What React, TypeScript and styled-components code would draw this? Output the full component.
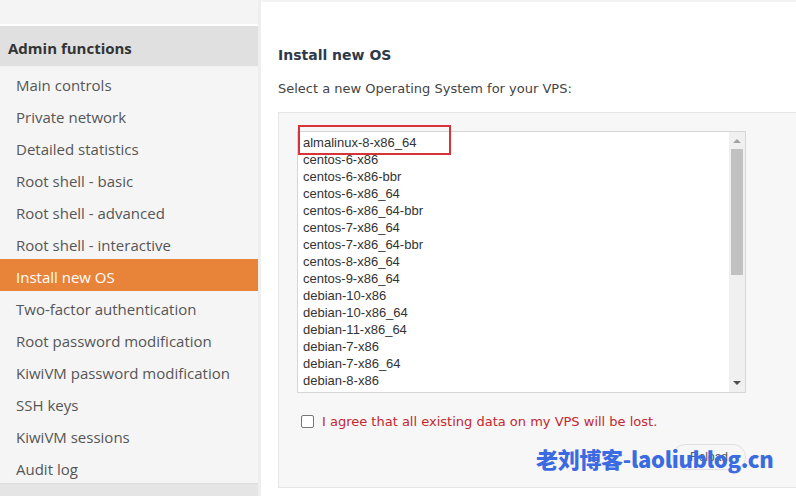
import React from "react";
import styled, { createGlobalStyle } from "styled-components";

const Global = createGlobalStyle`
  html, body { margin: 0; padding: 0; background: #ffffff; }
  body { width: 796px; height: 496px; overflow: hidden; }
  * { box-sizing: border-box; }
`;

const Page = styled.div`
  display: flex;
  width: 796px;
  height: 496px;
  position: relative;
  overflow: hidden;
`;

const Sidebar = styled.nav`
  width: 261px;
  flex: none;
  display: flex;
  flex-direction: column;
  background: #f5f5f5;
  border-right: 3px solid #eeeeee;
  font-family: "Open Sans", "Noto Sans", sans-serif;
`;

const SideTop = styled.div`
  height: 26px;
  background: #f4f4f4;
  border-bottom: 2px solid #ffffff;
`;

const SideHeader = styled.div`
  height: 41px;
  display: flex;
  align-items: center;
  padding: 4px 0 0 8px;
  background: #e0e0e0;
  border-bottom: 1px solid #f2f2f2;
  font-size: 15px;
  font-weight: 700;
  color: #333333;
`;

const NavItem = styled.div<{ $active?: boolean }>`
  height: 32px;
  display: flex;
  align-items: center;
  padding: 4px 0 0 16px;
  font-size: 15px;
  color: ${(p) => (p.$active ? "#ffffff" : "#555555")};
  background: ${(p) => (p.$active ? "#e8843a" : "transparent")};
`;

const SideBottom = styled.div`
  flex: 1;
  background: #e5e5e5;
  border-top: 1px solid #dcdcdc;
`;

const Main = styled.main`
  flex: 1;
  display: flex;
  flex-direction: column;
  padding: 44px 0 0 17px;
  background: #ffffff;
  border-top: 2px solid #f3f3f3;
  font-family: "DejaVu Sans", Verdana, sans-serif;
`;

const Title = styled.h2`
  margin: 0;
  font-size: 14px;
  font-weight: 700;
  color: #2d3a4a;
  line-height: 18px;
`;

const Lead = styled.p`
  margin: 17px 0 0 0;
  font-size: 13px;
  color: #444444;
  line-height: 16px;
`;

const Panel = styled.section`
  margin-top: 15px;
  height: 376px;
  background: #f7f7f7;
  border: 1px solid #e6e6e6;
  border-right: none;
  padding: 18px 0 0 18px;
  display: flex;
  flex-direction: column;
`;

const ListBox = styled.div`
  width: 449px;
  height: 262px;
  flex: none;
  background: #ffffff;
  border: 1px solid #d6d6d6;
  display: flex;
  position: relative;
`;

const Options = styled.div`
  flex: 1;
  overflow: hidden;
  padding: 2px 0 0 5px;
  font-family: "Liberation Sans", Arial, sans-serif;
  font-size: 13px;
  color: #333333;
`;

const Option = styled.div`
  height: 17px;
  line-height: 17px;
  white-space: nowrap;
`;

const Scrollbar = styled.div`
  width: 16px;
  flex: none;
  background: #f0f0f0;
  display: flex;
  flex-direction: column;
  align-items: center;
`;

const Arrow = styled.div`
  height: 17px;
  display: flex;
  align-items: center;
  justify-content: center;
`;

const Thumb = styled.div`
  width: 12px;
  height: 126px;
  background: #c1c1c1;
`;

const Track = styled.div`
  flex: 1;
`;

const Highlight = styled.div`
  position: absolute;
  left: 0;
  top: -7px;
  width: 153px;
  height: 30px;
  border: 2px solid #d7343a;
  pointer-events: none;
`;

const AgreeRow = styled.label`
  display: flex;
  align-items: center;
  margin-top: 21px;
  padding-left: 4px;
  gap: 8px;
  font-size: 13px;
  color: #c2282d;
`;

const Check = styled.span`
  width: 13px;
  height: 13px;
  border: 1px solid #767676;
  border-radius: 2px;
  background: #ffffff;
`;

const ButtonRow = styled.div`
  width: 449px;
  display: flex;
  justify-content: flex-end;
  margin-top: 15px;
`;

const Reload = styled.button`
  height: 26px;
  padding: 0 17px;
  border: 1px solid #e0e0e0;
  border-radius: 13px;
  background: #f7f7f7;
  font-family: "Liberation Sans", Arial, sans-serif;
  font-size: 12px;
  color: #555555;
`;

const Watermark = styled.div`
  position: absolute;
  left: 536px;
  top: 442px;
  font-family: "Noto Sans CJK SC", "Noto Sans", sans-serif;
  font-weight: 900;
  font-size: 22px;
  color: #3b6be0;
  white-space: nowrap;
  letter-spacing: -0.3px;
`;

const nav = [
  "Main controls",
  "Private network",
  "Detailed statistics",
  "Root shell - basic",
  "Root shell - advanced",
  "Root shell - interactive",
  "Install new OS",
  "Two-factor authentication",
  "Root password modification",
  "KiwiVM password modification",
  "SSH keys",
  "KiwiVM sessions",
  "Audit log",
];

const os = [
  "almalinux-8-x86_64",
  "centos-6-x86",
  "centos-6-x86-bbr",
  "centos-6-x86_64",
  "centos-6-x86_64-bbr",
  "centos-7-x86_64",
  "centos-7-x86_64-bbr",
  "centos-8-x86_64",
  "centos-9-x86_64",
  "debian-10-x86",
  "debian-10-x86_64",
  "debian-11-x86_64",
  "debian-7-x86",
  "debian-7-x86_64",
  "debian-8-x86",
  "debian-8-x86_64",
];

export default function App() {
  return (
    <Page>
      <Global />
      <Sidebar>
        <SideTop />
        <SideHeader>Admin functions</SideHeader>
        {nav.map((n) => (
          <NavItem key={n} $active={n === "Install new OS"}>
            {n}
          </NavItem>
        ))}
        <SideBottom />
      </Sidebar>
      <Main>
        <Title>Install new OS</Title>
        <Lead>Select a new Operating System for your VPS:</Lead>
        <Panel>
          <ListBox>
            <Options>
              {os.map((o) => (
                <Option key={o}>{o}</Option>
              ))}
            </Options>
            <Scrollbar>
              <Arrow>
                <svg width="8" height="5" viewBox="0 0 8 5">
                  <path d="M0 5 L4 1 L8 5 Z" fill="#a3a3a3" />
                </svg>
              </Arrow>
              <Thumb />
              <Track />
              <Arrow>
                <svg width="8" height="5" viewBox="0 0 8 5">
                  <path d="M0 0 L8 0 L4 4 Z" fill="#505050" />
                </svg>
              </Arrow>
            </Scrollbar>
            <Highlight />
          </ListBox>
          <AgreeRow>
            <Check />
            I agree that all existing data on my VPS will be lost.
          </AgreeRow>
          <ButtonRow>
            <Reload>Reload</Reload>
          </ButtonRow>
        </Panel>
      </Main>
      <Watermark>老刘博客-laoliublog.cn</Watermark>
    </Page>
  );
}
